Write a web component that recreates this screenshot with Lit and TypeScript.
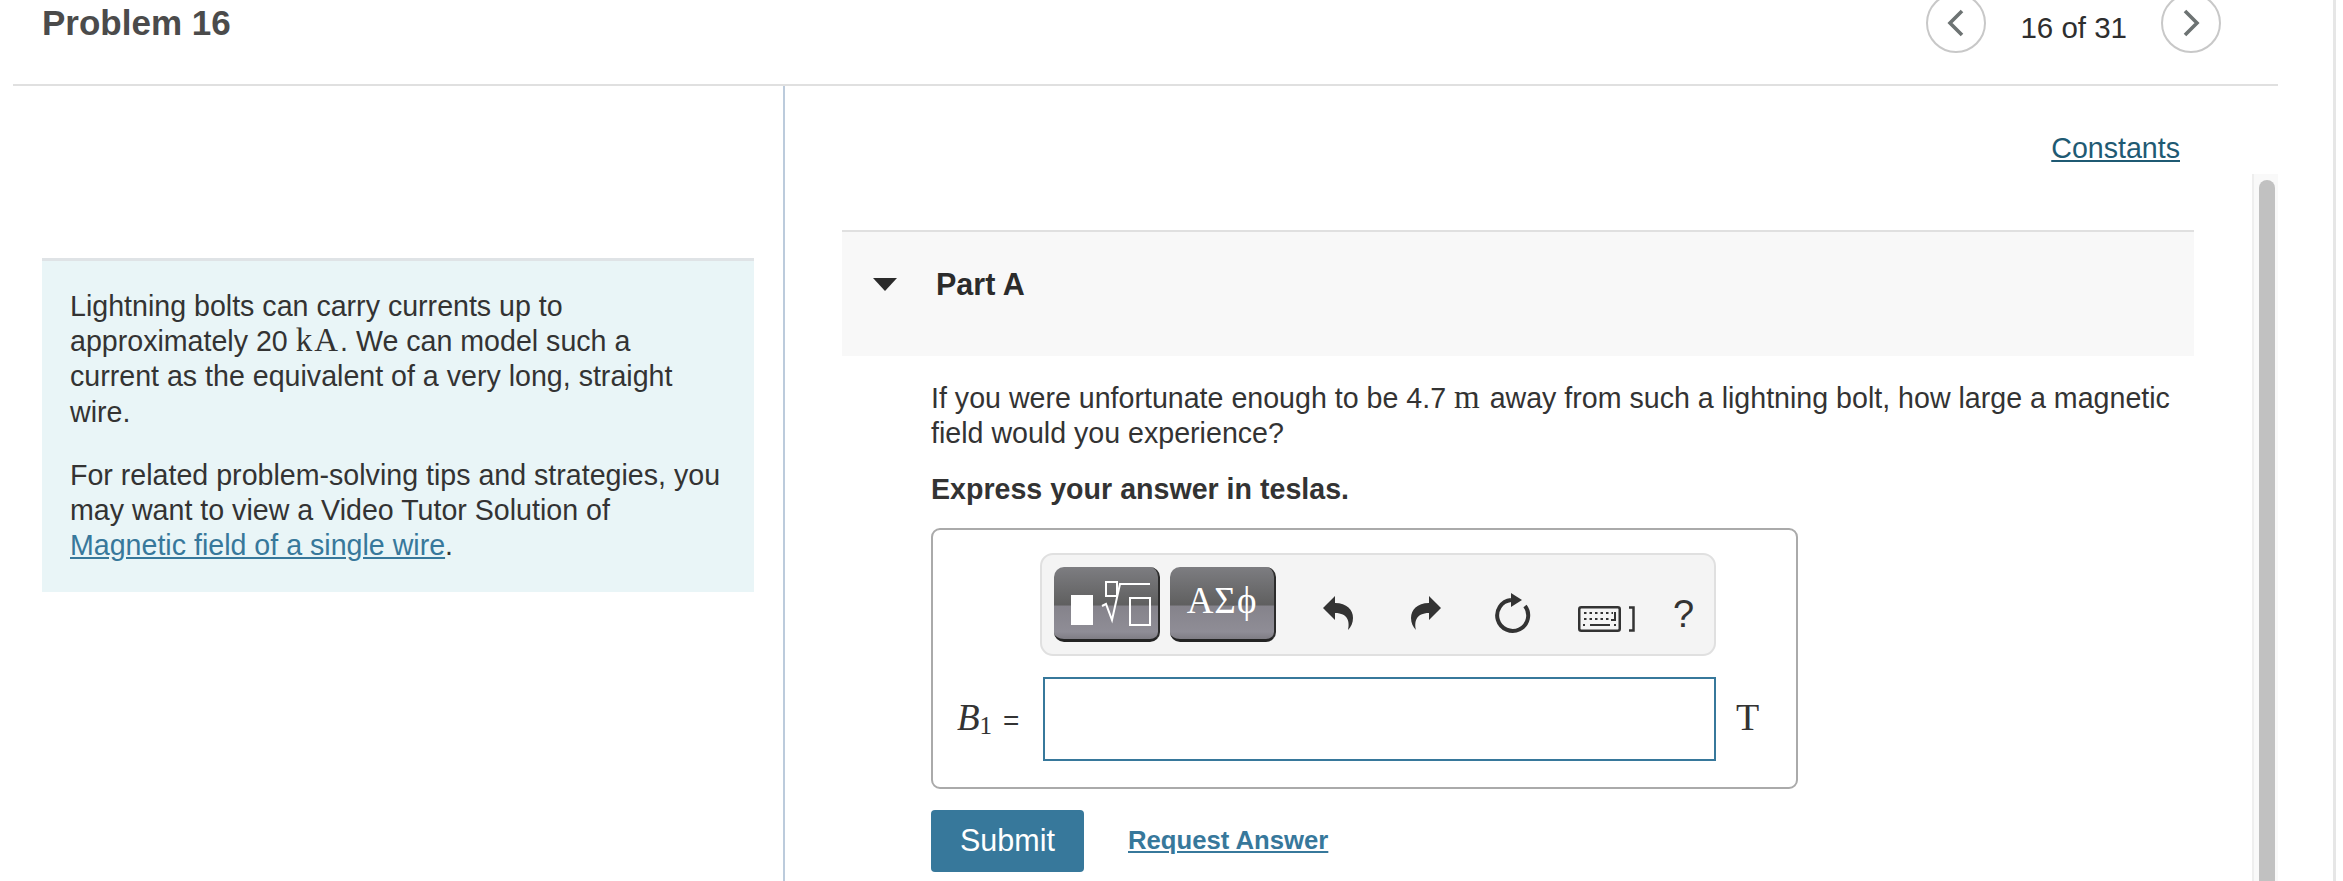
import { LitElement, html, css } from 'lit';
import { customElement } from 'lit/decorators.js';

@customElement('app-root')
export class AppRoot extends LitElement {
    static styles = css`
        :host {
            display: block;
            font-family: "Liberation Sans", Arial, sans-serif;
            font-size: 28.6px;
            line-height: 35.2px;
            color: #333;
        }

        .pagina {
            position: relative;
            width: 2336px;
            height: 881px;
            box-sizing: border-box;
            overflow: hidden;
            padding-left: 13px;
            border-right: 3px solid #e6e6e6;
            background: #fff;
        }

        .cabecera {
            display: flex;
            justify-content: space-between;
            width: 2265px;
            height: 86px;
            box-sizing: border-box;
            padding: 0 57px 0 29px;
            border-bottom: 2px solid #e0e0e0;
        }

        .titulo {
            margin: 4px 0 0;
            font-size: 35px;
            line-height: 38px;
            font-weight: bold;
            color: #4b4b4b;
        }

        .navegacion {
            display: flex;
            align-items: center;
            gap: 34px;
            height: 60px;
            margin-top: -7px;
            font-size: 29.5px;
        }

        .contador {
            margin-top: 9px;
            color: #2e2e2e;
        }

        .circulo {
            display: flex;
            align-items: center;
            justify-content: center;
            width: 60px;
            height: 60px;
            box-sizing: border-box;
            border: 2px solid #c8c8c8;
            border-radius: 50%;
        }

        .cuerpo {
            display: flex;
            height: 795px;
        }

        .izquierda {
            width: 772px;
            box-sizing: border-box;
            padding: 172px 0 0 29px;
            border-right: 2px solid #bccbdc;
        }

        .intro {
            box-sizing: border-box;
            width: 712px;
            padding: 28px 30px 29px 28px;
            background: #e9f5f7;
            border-top: 3px solid #dfe3e6;
        }

        .intro p {
            margin: 0 0 28px;
        }

        .intro p:last-child {
            margin-bottom: 0;
        }

        .mate {
            font-family: "Liberation Serif", "Times New Roman", serif;
            font-size: 33px;
            line-height: 30px;
            letter-spacing: 2px;
        }

        a {
            color: #37789b;
            text-decoration: underline;
        }

        .derecha {
            width: 1408px;
            box-sizing: border-box;
            padding-left: 57px;
        }

        .constantes {
            width: 1338px;
            margin: 45px 0 64px;
            text-align: right;
        }

        .constantes a {
            color: #1f5a73;
        }

        .parte {
            display: flex;
            align-items: center;
            gap: 39px;
            width: 1352px;
            height: 126px;
            box-sizing: border-box;
            padding: 0 0 20px 31px;
            background: #f8f8f8;
            border-top: 2px solid #e0e0e0;
            font-size: 30.5px;
            font-weight: bold;
            color: #2b2b2b;
        }

        .triangulo {
            width: 24px;
            height: 13px;
        }

        .contenido {
            width: 1263px;
            margin-left: 89px;
        }

        .pregunta {
            margin: 25px 0 20px;
            padding-right: 20px;
        }

        .indicacion {
            margin: 0 0 21px;
            font-weight: bold;
        }

        .respuesta {
            width: 867px;
            height: 261px;
            box-sizing: border-box;
            padding-top: 23px;
            border: 2px solid #aaa;
            border-radius: 9px;
        }

        .herramientas {
            display: flex;
            align-items: flex-start;
            width: 676px;
            height: 103px;
            box-sizing: border-box;
            margin-left: 107px;
            padding: 12px 0 0 12px;
            background: #f4f4f4;
            border: 2px solid #e0e0e0;
            border-radius: 13px;
        }

        .plantilla {
            display: flex;
            align-items: center;
            justify-content: center;
            width: 106px;
            height: 75px;
            box-sizing: border-box;
            margin-right: 10px;
            border-radius: 10px;
            border-right: 2px solid #2c2c2c;
            border-bottom: 3px solid #232323;
            background: linear-gradient(#7d7d81 0%, #5f5f5f 53%, #85838b 54%, #8f8d96 90%, #7f7d84 100%);
            color: #fff;
            font-family: "Liberation Serif", "Times New Roman", serif;
            font-size: 37px;
            line-height: 37px;
        }

        .raiz {
            justify-content: flex-start;
            padding-left: 17px;
        }

        .griegas {
            margin-top: -5px;
            letter-spacing: 1px;
        }

        .deshacer { margin: 29px 0 0 37px; }
        .rehacer { margin: 29px 0 0 58px; }
        .recargar { margin: 26px 0 0 54px; }
        .teclado { margin: 39px 0 0 47px; }

        .ayuda {
            margin: 25px 0 0 38px;
            font-size: 38px;
            line-height: 44px;
        }

        .fila {
            display: flex;
            align-items: center;
            margin-top: 21px;
            padding-left: 24px;
        }

        .etiqueta {
            width: 86px;
            font-size: 28px;
            white-space: nowrap;
        }

        .etiqueta i {
            font-family: "Liberation Serif", "Times New Roman", serif;
            font-size: 37px;
        }

        .etiqueta sub {
            font-family: "Liberation Serif", "Times New Roman", serif;
            font-size: 25px;
            line-height: 0;
            vertical-align: -4px;
            margin-right: 11px;
        }

        .entrada {
            width: 673px;
            height: 84px;
            box-sizing: border-box;
            border: 2px solid #37789b;
            background: #fff;
            outline: none;
        }

        .unidad {
            margin: -2px 0 0 20px;
            font-family: "Liberation Serif", "Times New Roman", serif;
            font-size: 38px;
        }

        .acciones {
            display: flex;
            align-items: center;
            gap: 44px;
            margin-top: 21px;
        }

        .enviar {
            width: 153px;
            height: 62px;
            padding: 0;
            border: none;
            border-radius: 4px;
            background: #37789b;
            color: #fff;
            font-family: inherit;
            font-size: 30.5px;
        }

        .solicitar {
            font-size: 25.7px;
            font-weight: bold;
        }

        .barra {
            position: absolute;
            left: 2252px;
            top: 174px;
            bottom: 0;
            width: 26px;
            box-sizing: border-box;
            padding: 6px 3px 0 5px;
            background: #f9f9f9;
            border-left: 2px solid #eee;
        }

        .barra div {
            height: 100%;
            border-radius: 8px 8px 0 0;
            background: #c1c1c1;
        }
    `;

    render() {
        return html`
            <div class="pagina">
                <header class="cabecera">
                    <h1 class="titulo">Problem 16</h1>
                    <div class="navegacion">
                        <div class="circulo">
                            <svg width="18" height="30" viewBox="0 0 18 30" fill="none" stroke="#6d7373" stroke-width="3.6"><path d="M15 3 L3 15 L15 27"/></svg>
                        </div>
                        <span class="contador">16 of 31</span>
                        <div class="circulo">
                            <svg width="18" height="30" viewBox="0 0 18 30" fill="none" stroke="#6d7373" stroke-width="3.6"><path d="M3 3 L15 15 L3 27"/></svg>
                        </div>
                    </div>
                </header>

                <div class="cuerpo">
                    <section class="izquierda">
                        <div class="intro">
                            <p>Lightning bolts can carry currents up to approximately 20 <span class="mate">kA</span>. We can model such a current as the equivalent of a very long, straight wire.</p>
                            <p>For related problem-solving tips and strategies, you may want to view a Video Tutor Solution of <a href="#">Magnetic field of a single wire</a>.</p>
                        </div>
                    </section>

                    <section class="derecha">
                        <div class="constantes"><a href="#">Constants</a></div>

                        <div class="parte">
                            <svg class="triangulo" viewBox="0 0 24 13"><path d="M0 0 H24 L12 13 Z" fill="#2b2b2b"/></svg>
                            <span>Part A</span>
                        </div>

                        <div class="contenido">
                            <p class="pregunta">If you were unfortunate enough to be 4.7 <span class="mate">m</span> away from such a lightning bolt, how large a magnetic field would you experience?</p>
                            <p class="indicacion">Express your answer in teslas.</p>

                            <div class="respuesta">
                                <div class="herramientas">
                                    <div class="plantilla raiz">
                                        <svg width="80" height="48" viewBox="0 0 80 48" fill="none" stroke="#fff" stroke-width="2">
                                            <rect x="0" y="16" width="22" height="30" fill="#fff" stroke="none"/>
                                            <rect x="35" y="3" width="11" height="14"/>
                                            <path d="M31 27 L35 25 L41 41 L49 5 H79"/>
                                            <rect x="59" y="19" width="20" height="27"/>
                                        </svg>
                                    </div>
                                    <div class="plantilla"><span class="griegas">ΑΣϕ</span></div>

                                    <svg class="deshacer" width="30" height="34" viewBox="0 0 30 34" fill="#333"><path d="M0 12 L12 0 V7 C24 7 30 14 30 22 C30 27 28 31 25 34 C27 26 25 17 12 17 V24 Z"/></svg>
                                    <svg class="rehacer" width="30" height="34" viewBox="0 0 30 34" fill="#333"><path d="M30 12 L18 0 V7 C6 7 0 14 0 22 C0 27 2 31 5 34 C3 26 5 17 18 17 V24 Z"/></svg>
                                    <svg class="recargar" width="36" height="40" viewBox="0 0 36 40" fill="none">
                                        <path d="M30 13 A15.5 15.5 0 1 1 16 7" stroke="#333" stroke-width="4"/>
                                        <path d="M16 0 L27 7 L16 14 Z" fill="#333"/>
                                    </svg>
                                    <svg class="teclado" width="57" height="26" viewBox="0 0 57 26" fill="none" stroke="#333">
                                        <rect x="1.25" y="1.25" width="40.5" height="23.5" rx="2" stroke-width="2.5"/>
                                        <path d="M6 7 H35 M6 13 H32" stroke-width="2" stroke-dasharray="2.5 3"/>
                                        <path d="M37 6 V14 H33 M5 19 H7 M36 19 H38" stroke-width="2"/>
                                        <path d="M12 19 H32" stroke-width="2"/>
                                        <path d="M51 1.5 H55.5 V24.5 H51" stroke-width="2.5"/>
                                    </svg>
                                    <span class="ayuda">?</span>
                                </div>

                                <div class="fila">
                                    <span class="etiqueta"><i>B</i><sub>1</sub>=</span>
                                    <input class="entrada" type="text">
                                    <span class="unidad">T</span>
                                </div>
                            </div>

                            <div class="acciones">
                                <button class="enviar">Submit</button>
                                <a class="solicitar" href="#">Request Answer</a>
                            </div>
                        </div>
                    </section>
                </div>

                <div class="barra"><div></div></div>
            </div>
        `;
    }
}
